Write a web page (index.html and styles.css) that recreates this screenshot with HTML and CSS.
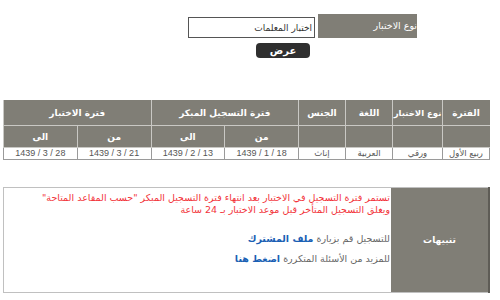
FILE: index.html
```html
<!DOCTYPE html>
<html lang="ar" dir="rtl">
<head>
  <meta charset="UTF-8" />
  <title>الاختبارات</title>
  <link rel="stylesheet" href="styles.css">
</head>
<body>
  <div class="search">
    <div class="search-row">
      <div class="search-label">نوع الاختبار</div>
      <input type="text" class="search-input" value="اختبار المعلمات" />
    </div>
    <div class="search-actions">
      <button class="btn-show">عرض</button>
    </div>
  </div>

  <table class="periods">
    <thead>
      <tr>
        <th class="c-period">الفترة</th>
        <th class="c-type">نوع الاختبار</th>
        <th class="c-lang">اللغة</th>
        <th class="c-sex">الجنس</th>
        <th colspan="2">فترة التسجيل المبكر</th>
        <th colspan="2">فترة الاختبار</th>
      </tr>
      <tr class="sub">
        <th></th>
        <th></th>
        <th></th>
        <th></th>
        <th>من</th>
        <th>الى</th>
        <th>من</th>
        <th>الى</th>
      </tr>
    </thead>
    <tbody>
      <tr>
        <td>ربيع الأول</td>
        <td>ورقي</td>
        <td>العربية</td>
        <td>إناث</td>
        <td class="date" dir="ltr">1439 / 1 / 18</td>
        <td class="date" dir="ltr">1439 / 2 / 13</td>
        <td class="date" dir="ltr">1439 / 3 / 21</td>
        <td class="date" dir="ltr">1439 / 3 / 28</td>
      </tr>
    </tbody>
  </table>

  <table class="notes">
    <tr>
      <th class="notes-title">تنبيهات</th>
      <td class="notes-body">
        <p class="warn">تستمر فترة التسجيل في الاختبار بعد انتهاء فترة التسجيل المبكر "حسب المقاعد المتاحة"<br>ويغلق التسجيل المتأخر قبل موعد الاختبار بـ 24 ساعة</p>
        <p class="info">للتسجيل قم بزيارة <a href="#">ملف المشترك</a></p>
        <p class="info">للمزيد من الأسئلة المتكررة <a href="#">اضغط هنا</a></p>
      </td>
    </tr>
  </table>
</body>
</html>
```

FILE: styles.css
```css
body {
  margin: 0;
  font-family: "DejaVu Sans", sans-serif;
  font-size: 10px;
  background: #fff;
  color: #555;
}
.search {
  padding: 14px 83px 0 0;
}
.search-row {
  display: flex;
  align-items: center;
}
.search-label {
  width: 99px;
  height: 24px;
  line-height: 24px;
  background-color: #807e76;
  color: #fff;
  font-size: 9.5px;
  white-space: nowrap;
  text-align: right;
  margin-left: 3px;
}
.search-input {
  width: 127px;
  height: 21px;
  box-sizing: border-box;
  border: 1px solid #555;
  padding: 0 2px;
  font-family: "DejaVu Sans", sans-serif;
  font-size: 9px;
  color: #333;
  text-align: right;
  margin: 3px 0 0 0;
}
.search-actions {
  padding: 5px 107px 0 0;
}
.btn-show {
  width: 54px;
  height: 15px;
  padding: 0;
  border: none;
  border-radius: 4px;
  background-color: #2f2f2f;
  color: #fff;
  font-family: "DejaVu Sans", sans-serif;
  font-size: 10px;
  font-weight: bold;
  line-height: 15px;
}
.periods {
  margin: 42px 10px 0 0;
  width: 487px;
  border-collapse: collapse;
  table-layout: fixed;
}
.periods th {
  background-color: #807e76;
  color: #fff;
  font-weight: bold;
  font-size: 9px;
  height: 24px;
  padding: 0;
  border: 1px solid #c9c8c4;
  white-space: nowrap;
}
.periods thead tr:first-child th {
  border-top-color: #807e76;
}
.periods th.c-period { width: 46px; border-right-color: #807e76; }
.periods th.c-type { width: 49px; font-size: 8.5px; }
.periods th.c-lang { width: 46px; }
.periods th.c-sex { width: 46px; }
.periods tr.sub th {
  height: 21px;
}
.periods tr.sub th:first-child { border-right-color: #807e76; }
.periods td {
  text-align: center;
  font-size: 8.5px;
  color: #555;
  height: 11px;
  line-height: 11px;
  padding: 0;
  border: 1px solid #9a9a9a;
  white-space: nowrap;
}
.periods td.date {
  font-family: "Liberation Sans", "DejaVu Sans", sans-serif;
  font-size: 9px;
}
.notes {
  margin: 27px 10px 0 0;
  width: 487px;
  height: 106px;
  border-collapse: collapse;
  border: 1px solid #c0c0c0;
}
.notes-title {
  width: 97px;
  background-color: #807e76;
  color: #fff;
  font-size: 9px;
  font-weight: bold;
  border-right: 2px solid #5e5c56;
  padding: 0;
}
.notes-body {
  vertical-align: top;
  padding: 4px 1px 0 0;
}
.notes-body p {
  margin: 0;
  font-size: 9.5px;
  line-height: 12px;
}
.warn {
  color: #f2333a;
}
.info {
  color: #666;
}
.warn + .info {
  margin-top: 17px;
}
.info + .info {
  margin-top: 8px;
}
.info a {
  color: #1a5fb4;
  font-weight: bold;
  text-decoration: none;
}
```
